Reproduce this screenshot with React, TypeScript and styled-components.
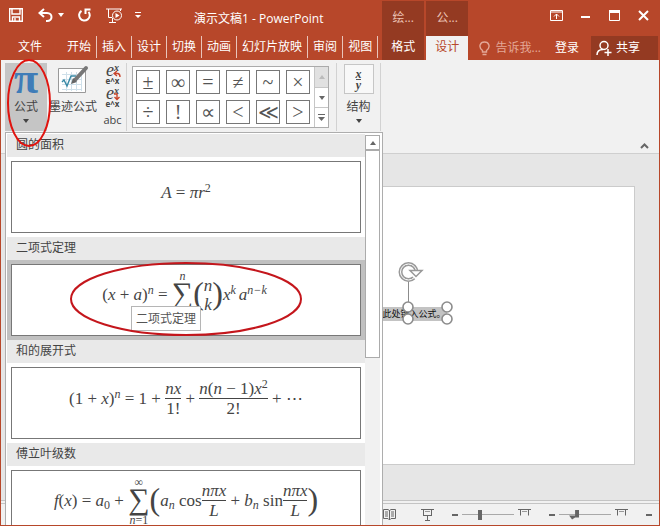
import React from 'react';
import styled, { createGlobalStyle, css } from 'styled-components';

const Global = createGlobalStyle`
  * { box-sizing: border-box; }
  body { margin: 0; font-family: "Open Sans", "Noto Sans CJK SC", sans-serif; font-size: 12px; line-height: 16px; color: #444; }
  button, input { font: inherit; color: inherit; margin: 0; padding: 0; border: 0; background: none; }
  button { white-space: nowrap; }
  svg { display: block; flex: none; }
`;

const RED = '#b7472a';
const DARK_RED = '#943a22';

const Window = styled.div`
  position: relative;
  display: flex;
  flex-direction: column;
  height: 100vh;
  min-height: 420px;
  overflow: hidden;
  background: #e6e6e6;
  border: solid ${RED};
  border-width: 0 1px 1px;
`;

/* Title bar and tabs */
const Header = styled.header`
  display: flex;
  flex: none;
  height: 60px;
  background: ${RED};
  color: #fff;
`;
const HeaderLeft = styled.div`
  display: flex;
  flex-direction: column;
  padding-right: 4px;
`;
const HeaderRight = styled.div`
  display: flex;
  flex: 1;
  flex-direction: column;
`;
const TitleRow = styled.div`
  display: flex;
  align-items: center;
  height: 36px;
  padding: 0 0 6px 8px;
`;
const QuickButton = styled.button<{ $gap: number }>`
  margin-right: ${(p) => p.$gap}px;
`;
const Title = styled.h1`
  margin: 8px 0 0;
  font-size: 12px;
  font-weight: 400;
  white-space: nowrap;
`;
const Tabs = styled.nav`
  display: flex;
  height: 22px;
`;
const Tab = styled.button`
  padding: 0 5px;
  border-right: 1px solid #e9c5bb;
`;
const FileTab = styled.button`
  padding: 0 20px 0 17px;
`;
const ContextTab = styled.div`
  display: flex;
  flex-direction: column;
  width: 42px;
  margin: 1px 2px 0 0;
  background: ${DARK_RED};
  text-align: center;
  color: #ecc3b7;
`;
const ContextName = styled.span`
  height: 35px;
  padding-top: 9px;
`;
const ContextButton = styled.button<{ $active?: boolean }>`
  height: 24px;
  padding-bottom: 2px;
  color: ${(p) => (p.$active ? RED : '#fff')};
  background: ${(p) => (p.$active ? '#f1f1f1' : 'transparent')};
`;
const Controls = styled.div`
  display: flex;
  align-items: center;
  justify-content: flex-end;
  gap: 18px;
  height: 36px;
  padding: 0 10px 6px 0;
`;
const AccountRow = styled.div`
  display: flex;
  align-items: center;
  justify-content: flex-end;
  height: 24px;
`;
const TellMe = styled.button`
  display: flex;
  align-items: center;
  gap: 6px;
  margin-right: 14px;
  color: #e3a797;
`;
const SignIn = styled.button`
  margin-right: 12px;
`;
const Share = styled.button`
  display: flex;
  align-items: center;
  gap: 4px;
  height: 24px;
  padding: 0 18px 0 5px;
  margin-right: 1px;
  background: ${DARK_RED};
`;

/* Ribbon */
const Ribbon = styled.section`
  display: flex;
  flex: none;
  height: 94px;
  padding: 3px 0 22px 4px;
  background: #f1f1f1;
  border-bottom: 1px solid #cfcfcf;
`;
const RibbonButton = styled.button<{ $pressed?: boolean; $width: number }>`
  display: flex;
  flex-direction: column;
  align-items: center;
  gap: 4px;
  width: ${(p) => p.$width}px;
  background: ${(p) => (p.$pressed ? '#c5c5c5' : 'transparent')};
`;
const IconSlot = styled.span`
  display: flex;
  align-items: center;
  justify-content: center;
  height: 32px;
`;
const Pi = styled.span`
  font: bold 44px/36px "Liberation Serif", serif;
  height: 36px;
  color: #3f7cb8;
`;
const SmallTools = styled.div`
  display: flex;
  flex-direction: column;
  align-items: center;
  width: 27px;
`;
const SmallTool = styled.button`
  position: relative;
  height: 23px;
  font-size: 11px;
`;
const BigE = styled.span`
  display: block;
  font: italic 18px/13px "Liberation Serif", serif;
  color: #444;
  sup { font: italic bold 10px/8px "Liberation Serif", serif; vertical-align: 5px; }
`;
const LinearE = styled.span`
  display: block;
  font: bold 8px/8px "Open Sans", sans-serif;
`;
const ToolArrow = styled.svg`
  position: absolute;
  right: -2px;
  top: 7px;
`;
const Divider = styled.span`
  width: 1px;
  height: 68px;
  background: #d2d2d2;
`;
const Gallery = styled.div`
  display: flex;
  height: 62px;
  margin: 3px 7px 0 5px;
  background: #fff;
  border: 1px solid #ababab;
`;
const Symbols = styled.div`
  display: grid;
  grid-template-columns: repeat(6, 24px);
  grid-auto-rows: 24px;
  gap: 6px;
  padding: 3px 4px 3px 3px;
`;
const SymbolButton = styled.button`
  border: 1px solid #777;
  font: 20px/20px "Liberation Serif", serif;
  color: #555;
`;
const GalleryScroll = styled.div`
  display: grid;
  grid-template-rows: repeat(3, 1fr);
  width: 14px;
  border-left: 1px solid #c6c6c6;
`;
const ScrollStep = styled.button<{ $off?: boolean }>`
  display: flex;
  align-items: center;
  justify-content: center;
  background: ${(p) => (p.$off ? '#e1e1e1' : '#fff')};
  color: ${(p) => (p.$off ? '#bbb' : '#666')};
  & + & { border-top: 1px solid #c6c6c6; }
`;
const FractionIcon = styled.span`
  display: flex;
  flex-direction: column;
  align-items: center;
  justify-content: center;
  width: 30px;
  height: 30px;
  border: 1px solid #c6c6c6;
  background: #f8f8f8;
  font: italic bold 12px/10px "Liberation Serif", serif;
  span + span { border-top: 1px solid #555; }
`;
const Collapse = styled.button`
  align-self: flex-end;
  margin: 0 10px -18px auto;
`;

/* Slide area */
const Workspace = styled.main`
  flex: 1;
  min-height: 0;
  padding: 32px 24px 35px 181px;
`;
const Slide = styled.div`
  position: relative;
  height: 100%;
  background: #fff;
  border: 1px solid #cbcbcb;
`;
const EquationBox = styled.div`
  position: absolute;
  left: calc(50% - 39px);
  top: 120px;
  width: 77px;
  height: 14px;
  padding-right: 1px;
  background: #c3c3c3;
  font-size: 9px;
  line-height: 14px;
  text-align: right;
  white-space: nowrap;
  color: #111;
`;
const Handles = styled.svg`
  position: absolute;
  left: 0;
  top: -52px;
  overflow: visible;
`;
const Status = styled.footer`
  display: flex;
  flex: none;
  align-items: center;
  justify-content: flex-end;
  height: 25px;
  background: #f1f1f1;
  border-top: 4px double #c4c4c4;
  padding-right: 7px;
`;
const StatusButton = styled.button<{ $gap: number }>`
  margin-right: ${(p) => p.$gap}px;
`;
const Zoom = styled.input<{ $notched?: boolean }>`
  appearance: none;
  width: 52px;
  height: 12px;
  margin-right: 4px;
  background: linear-gradient(#a9a9a9, #a9a9a9) center / 100% 1px no-repeat;
  &::-webkit-slider-thumb {
    appearance: none;
    width: ${(p) => (p.$notched ? 10 : 4)}px;
    height: 10px;
    background: #666;
    ${(p) => p.$notched && css`clip-path: polygon(60% 0, 100% 0, 100% 80%, 60% 80%, 30% 100%, 0 60%, 60% 60%);`}
  }
`;

/* Equation menu */
const Menu = styled.div`
  position: absolute;
  left: 4px;
  top: 132px;
  bottom: -1px;
  display: flex;
  width: 378px;
  padding: 1px;
  background: #fff;
  border: 1px solid #adadad;
  border-bottom: 0;
  overflow: hidden;
`;
const MenuList = styled.div`
  flex: 1;
  overflow: hidden;
`;
const Band = styled.h2`
  height: 23px;
  margin: 0;
  padding: 3px 9px;
  background: #e9e9e9;
  font-size: 12px;
  font-weight: 400;
  color: #444;
`;
const Item = styled.button<{ $selected?: boolean }>`
  position: relative;
  display: block;
  width: 100%;
  height: 80px;
  padding: 4px;
  background: ${(p) => (p.$selected ? '#c0c0c0' : '#fff')};
`;
const Card = styled.span<{ $lift: number }>`
  display: flex;
  align-items: center;
  justify-content: center;
  height: 72px;
  padding-bottom: ${(p) => p.$lift}px;
  background: #fff;
  border: 1px solid #777;
`;
const Tooltip = styled.span`
  position: absolute;
  left: 124px;
  top: 46px;
  height: 25px;
  padding: 4px;
  background: #fff;
  border: 1px solid #b5b5b5;
  line-height: 15px;
  color: #555;
`;
const Scrollbar = styled.div`
  display: flex;
  flex-direction: column;
  width: 15px;
  margin: 1px 1px 0 0;
  background: #f1f1f1;
`;
const ScrollUp = styled.button`
  display: flex;
  align-items: center;
  justify-content: center;
  height: 15px;
  background: #fff;
  border: 1px solid #ababab;
  color: #666;
`;
const Thumb = styled.span`
  height: 208px;
  background: #fff;
  border: 1px solid #ababab;
`;

/* Formula parts */
const Formula = styled.span`
  display: inline-flex;
  align-items: center;
  font: 17px/18px "Liberation Serif", serif;
  white-space: pre;
  color: #444;
  sup, sub { font-size: 12px; line-height: 0; }
  sup { vertical-align: 6px; }
  sub { vertical-align: -3px; }
`;
const Fraction = styled.span`
  display: flex;
  flex-direction: column;
  align-items: center;
  > span + span { border-top: 1px solid #444; align-self: stretch; padding-top: 1px; }
`;
const SumColumn = styled.span`
  display: grid;
  grid-template-rows: 10px 28px 10px;
  justify-items: center;
  font-size: 12px;
  line-height: 10px;
`;
const Sigma = styled.span`
  font-size: 30px;
  line-height: 24px;
`;
const Paren = styled.span`
  font-size: 32px;
  line-height: 32px;
  height: 36px;
`;
const Stack = styled.i`
  display: flex;
  flex-direction: column;
  line-height: 19px;
`;
const Space = styled.span`
  width: 3px;
`;

const Ellipse = styled.svg<{ $x: number; $y: number }>`
  position: absolute;
  left: ${(p) => p.$x}px;
  top: ${(p) => p.$y}px;
  pointer-events: none;
`;

const Arrow = ({ up }: { up?: boolean }) => (
  <svg width="6" height="4" viewBox="0 0 6 4" fill="currentColor">
    <path d={up ? 'M0 4L3 0L6 4Z' : 'M0 0H6L3 4Z'} />
  </svg>
);

const Sum = ({ top, bottom }: { top: React.ReactNode; bottom: React.ReactNode }) => (
  <SumColumn>
    <span>{top}</span>
    <Sigma>∑</Sigma>
    <span>{bottom}</span>
  </SumColumn>
);

const Frac = ({ top, bottom }: { top: React.ReactNode; bottom: React.ReactNode }) => (
  <Fraction>
    <span>{top}</span>
    <span>{bottom}</span>
  </Fraction>
);

const ScreenIcon = ({ stand }: { stand?: boolean }) => (
  <svg width="13" height="13" viewBox="0 0 13 13" fill="none" stroke="#666">
    <path d="M0 1.5H13M2.5 2V7.5M10.5 2V7.5" />
    <path d="M4 3.5H9" stroke="#999" />
    {stand && <path d="M2 7.5H11M6.5 8V12M4 12.5H9" />}
  </svg>
);

const Minus = () => (
  <svg width="6" height="2" viewBox="0 0 6 2"><path d="M0 1H6" stroke="#666" strokeWidth="2" /></svg>
);

const tabs = ['开始', '插入', '设计', '切换', '动画', '幻灯片放映', '审阅', '视图'];
const symbols = ['±', '∞', '=', '≠', '~', '×', '÷', '!', '∝', '<', '≪', '>'];

const formulas = [
  {
    name: '圆的面积',
    lift: 8,
    body: <Formula><span><i>A</i> = <i>πr</i><sup>2</sup></span></Formula>,
  },
  {
    name: '二项式定理',
    lift: 10,
    selected: true,
    body: (
      <Formula>
        <span>(<i>x</i> + <i>a</i>)<sup><i>n</i></sup> = </span>
        <Sum top={<i>n</i>} bottom={<i>k=0</i>} />
        <Paren>(</Paren>
        <Stack><span>n</span><span>k</span></Stack>
        <Paren>)</Paren>
        <span><i>x</i><sup><i>k</i></sup></span>
        <Space />
        <span><i>a</i><sup><i>n−k</i></sup></span>
        <Space />
      </Formula>
    ),
  },
  {
    name: '和的展开式',
    lift: 8,
    body: (
      <Formula>
        <span>(1 + <i>x</i>)<sup><i>n</i></sup> = 1 + </span>
        <Frac top={<i>nx</i>} bottom="1!" />
        <span> + </span>
        <Frac top={<span><i>n</i>(<i>n</i> − 1)<i>x</i><sup>2</sup></span>} bottom="2!" />
        <span> + ⋯</span>
      </Formula>
    ),
  },
  {
    name: '傅立叶级数',
    lift: 10,
    body: (
      <Formula>
        <span><i>f</i>(<i>x</i>) = <i>a</i><sub>0</sub> + </span>
        <Sum top="∞" bottom={<span><i>n</i>=1</span>} />
        <Paren>(</Paren>
        <span><i>a<sub>n</sub></i> cos</span>
        <Frac top={<i>nπx</i>} bottom={<i>L</i>} />
        <span> + <i>b<sub>n</sub></i> sin</span>
        <Frac top={<i>nπx</i>} bottom={<i>L</i>} />
        <Paren>)</Paren>
      </Formula>
    ),
  },
];

const QuickAccess = () => (
  <>
    <QuickButton $gap={15} aria-label="保存">
      <svg width="14" height="14" viewBox="0 0 14 14" fill="none" stroke="#fff" strokeWidth="1.4">
        <path d="M.7 .7H13.3V13.3H.7ZM3 1V6H11V1M3.5 13V9H10.5V13M6 10V13" />
      </svg>
    </QuickButton>
    <QuickButton $gap={5} aria-label="撤消">
      <svg width="15" height="14" viewBox="0 0 15 14" fill="none" stroke="#fff" strokeWidth="2">
        <path d="M6 1L1.5 5L6 9M2 5H9C15 5 15 13 9 13H8" />
      </svg>
    </QuickButton>
    <QuickButton $gap={14} aria-label="撤消选项"><Arrow /></QuickButton>
    <QuickButton $gap={15} aria-label="重复">
      <svg width="13" height="14" viewBox="0 0 13 14" fill="none" stroke="#fff" strokeWidth="2">
        <path d="M3.5 2.8A5.3 5.3 0 1 0 10.5 3.8M7.5 6V1.5H12.5" />
      </svg>
    </QuickButton>
    <QuickButton $gap={12} aria-label="从头开始">
      <svg width="17" height="15" viewBox="0 0 17 15" fill="none" stroke="#fff">
        <path d="M0 1H16M2.5 1V9.5H6M14.5 1V3M3 14.5H10M6.5 10V14" />
        <circle cx="11" cy="7.5" r="4.5" />
        <path d="M9.5 5L13.5 7.5L9.5 10Z" fill="#fff" stroke="none" />
      </svg>
    </QuickButton>
    <QuickButton $gap={53} aria-label="自定义快速访问工具栏">
      <svg width="6" height="7" viewBox="0 0 6 7" fill="#fff"><path d="M0 0H6V1H0ZM0 3H6L3 6Z" /></svg>
    </QuickButton>
  </>
);

export default function App() {
  return (
    <Window>
      <Global />
      <Header>
        <HeaderLeft>
          <TitleRow>
            <QuickAccess />
            <Title>演示文稿1 - PowerPoint</Title>
          </TitleRow>
          <Tabs>
            <FileTab>文件</FileTab>
            {tabs.map((t) => <Tab key={t}>{t}</Tab>)}
          </Tabs>
        </HeaderLeft>
        <ContextTab>
          <ContextName>绘...</ContextName>
          <ContextButton>格式</ContextButton>
        </ContextTab>
        <ContextTab>
          <ContextName>公...</ContextName>
          <ContextButton $active>设计</ContextButton>
        </ContextTab>
        <HeaderRight>
          <Controls>
            <button aria-label="功能区显示选项">
              <svg width="13" height="11" viewBox="0 0 13 11" fill="none" stroke="#fff">
                <path d="M.5 .5H12.5V10.5H.5ZM0 2H13M6.5 9V4M4 6.5L6.5 4L9 6.5" />
              </svg>
            </button>
            <button aria-label="最小化">
              <svg width="10" height="11" viewBox="0 0 10 11"><path d="M0 7H9" stroke="#fff" strokeWidth="2" /></svg>
            </button>
            <button aria-label="最大化">
              <svg width="11" height="11" viewBox="0 0 11 11" fill="none" stroke="#fff"><path d="M.5 .5H10.5V10.5H.5Z" /><path d="M0 1.5H11" strokeWidth="3" /></svg>
            </button>
            <button aria-label="关闭">
              <svg width="11" height="11" viewBox="0 0 11 11"><path d="M1 1L10 10M10 1L1 10" stroke="#fff" strokeWidth="2" /></svg>
            </button>
          </Controls>
          <AccountRow>
            <TellMe>
              <svg width="11" height="15" viewBox="0 0 11 15" fill="none" stroke="currentColor" strokeWidth="1.4">
                <path d="M3.5 11V9.5C-1 6 1 1 5.5 1S12 6 7.5 9.5V11ZM3.5 13.5H7.5" />
              </svg>
              告诉我...
            </TellMe>
            <SignIn>登录</SignIn>
            <Share>
              <svg width="16" height="16" viewBox="0 0 16 16" fill="none" stroke="#fff" strokeWidth="1.5">
                <circle cx="8" cy="5.5" r="4" />
                <path d="M1 15C1 11 4 9.5 7 9.5M12 9V16M8.5 12.5H15.5" />
              </svg>
              共享
            </Share>
          </AccountRow>
        </HeaderRight>
      </Header>

      <Ribbon>
        <RibbonButton $pressed $width={42}>
          <IconSlot><Pi>π</Pi></IconSlot>
          公式
          <Arrow />
        </RibbonButton>
        <RibbonButton $width={52}>
          <IconSlot>
            <svg width="32" height="30" viewBox="0 0 32 30" fill="none">
              <path d="M1.5 4.5H28.5V28.5H1.5Z" fill="#fff" stroke="#999" />
              <path d="M5 10.5H25M5 15.5H25M5 20.5H25M5 25.5H25M9.5 8V27M14.5 8V27M19.5 8V27M24.5 8V27" stroke="#cfe0ea" />
              <path d="M5 18L7 16L10 22L14 12H19" stroke="#3a8aa6" strokeWidth="1.4" />
              <path d="M18 16L29 4" stroke="#777" strokeWidth="4" strokeLinecap="round" />
              <path d="M14 20L16 14L20 18Z" fill="#666" />
            </svg>
          </IconSlot>
          墨迹公式
        </RibbonButton>
        <SmallTools>
          <SmallTool aria-label="专业型">
            <BigE>e<sup>x</sup></BigE>
            <LinearE>e^x</LinearE>
            <ToolArrow width="8" height="8" viewBox="0 0 8 8" fill="none" stroke="#c8452d" strokeWidth="1.4"><path d="M4 1L1 3.5L4 6M1 3.5H5Q7 4 7 7" /></ToolArrow>
          </SmallTool>
          <SmallTool aria-label="线性">
            <BigE>e<sup>x</sup></BigE>
            <LinearE>e^x</LinearE>
            <ToolArrow width="8" height="8" viewBox="0 0 8 8" fill="none" stroke="#c8452d" strokeWidth="1.4"><path d="M1 1H4V6M1.5 4L4 6.5L6.5 4" /></ToolArrow>
          </SmallTool>
          <SmallTool>abc</SmallTool>
        </SmallTools>
        <Divider />
        <Gallery>
          <Symbols>
            {symbols.map((s) => <SymbolButton key={s}>{s}</SymbolButton>)}
          </Symbols>
          <GalleryScroll>
            <ScrollStep $off aria-label="上一行"><Arrow up /></ScrollStep>
            <ScrollStep aria-label="下一行"><Arrow /></ScrollStep>
            <ScrollStep aria-label="其他">
              <svg width="7" height="7" viewBox="0 0 7 7" fill="currentColor"><path d="M0 0H7V1H0ZM0 3H7L3.5 7Z" /></svg>
            </ScrollStep>
          </GalleryScroll>
        </Gallery>
        <Divider />
        <RibbonButton $width={43}>
          <IconSlot><FractionIcon><span>x</span><span>y</span></FractionIcon></IconSlot>
          结构
          <Arrow />
        </RibbonButton>
        <Divider />
        <Collapse aria-label="折叠功能区">
          <svg width="9" height="6" viewBox="0 0 9 6" fill="none" stroke="#666" strokeWidth="2"><path d="M1 5L4.5 1.5L8 5" /></svg>
        </Collapse>
      </Ribbon>

      <Workspace>
        <Slide>
          <EquationBox>
            在此处键入公式。
            <Handles width="80" height="70" viewBox="0 0 80 70" fill="none" stroke="#8c8c8c">
              <path d="M38.5 27V48" />
              <circle cx="38.5" cy="17" r="8" stroke="#999" strokeWidth="4" />
              <path d="M38 17H54L46 25Z" fill="#fff" stroke="none" />
              <circle cx="38.5" cy="17" r="8" stroke="#fff" strokeWidth="1" />
              <path d="M40 15.5H52L46 21.5Z" fill="#fff" stroke="#999" strokeWidth="1.5" />
              {[[38, 52], [77, 52], [38, 64], [77, 64]].map(([x, y]) => (
                <circle key={`${x}-${y}`} cx={x} cy={y} r="5" fill="#fff" strokeWidth="1.6" />
              ))}
            </Handles>
          </EquationBox>
        </Slide>
      </Workspace>

      <Status>
        <StatusButton $gap={25} aria-label="阅读视图">
          <svg width="13" height="13" viewBox="0 0 13 13" fill="none" stroke="#666">
            <path d="M.5 1.5H5L6.5 2.5L8 1.5H12.5V10.5H8L6.5 12L5 10.5H.5ZM6.5 2V12M2 4H5M2 6H5M2 8H5M8 4H11M8 6H11M8 8H11" />
          </svg>
        </StatusButton>
        <StatusButton $gap={18} aria-label="幻灯片放映"><ScreenIcon stand /></StatusButton>
        <StatusButton $gap={4} aria-label="缩小"><Minus /></StatusButton>
        <Zoom type="range" aria-label="显示比例" defaultValue={33} />
        <StatusButton $gap={18} aria-label="适应窗口"><ScreenIcon /></StatusButton>
        <StatusButton $gap={4} aria-label="缩小视图"><Minus /></StatusButton>
        <Zoom type="range" aria-label="视图比例" defaultValue={24} $notched />
        <StatusButton $gap={18} aria-label="放映比例"><ScreenIcon /></StatusButton>
        <StatusButton $gap={0} aria-label="缩小放映"><Minus /></StatusButton>
      </Status>

      <Menu>
        <MenuList>
          {formulas.map((f) => (
            <section key={f.name}>
              <Band>{f.name}</Band>
              <Item $selected={f.selected} aria-label={f.name}>
                <Card $lift={f.lift}>{f.body}</Card>
                {f.selected && <Tooltip>二项式定理</Tooltip>}
                {f.selected && (
                  <Ellipse $x={62} $y={1} width="234" height="76" viewBox="0 0 234 76" fill="none">
                    <ellipse cx="117" cy="38" rx="115" ry="36" stroke="#c4161c" strokeWidth="2" />
                  </Ellipse>
                )}
              </Item>
            </section>
          ))}
        </MenuList>
        <Scrollbar>
          <ScrollUp aria-label="向上滚动"><Arrow up /></ScrollUp>
          <Thumb />
        </Scrollbar>
      </Menu>

      <Ellipse $x={5} $y={58} width="46" height="92" viewBox="0 0 46 92" fill="none">
        <ellipse cx="23" cy="45" rx="21" ry="43" stroke="#e0140f" strokeWidth="2" />
      </Ellipse>
    </Window>
  );
}
